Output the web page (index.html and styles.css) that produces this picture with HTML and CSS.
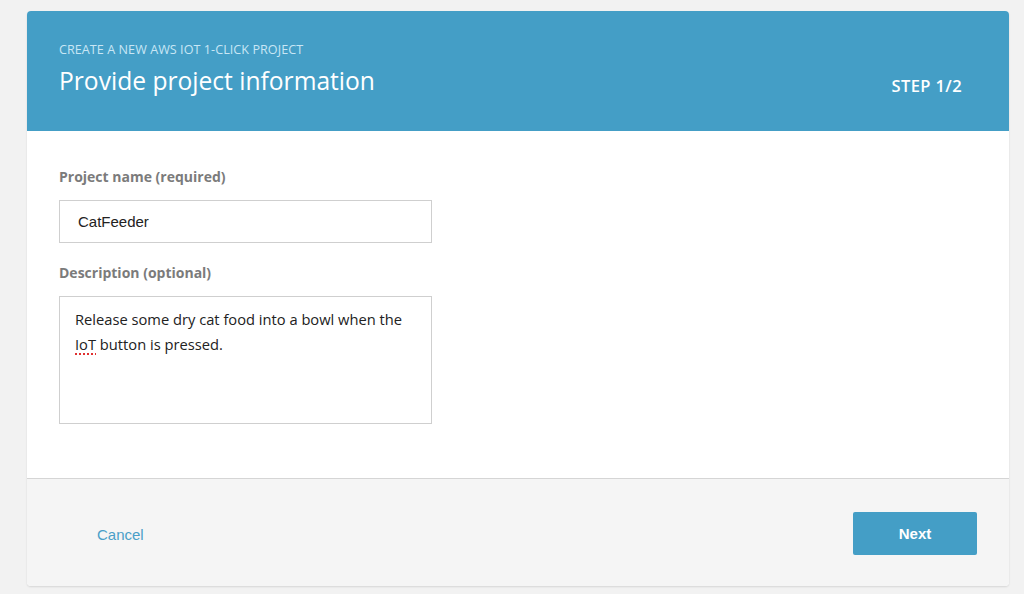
FILE: index.html
```html
<!DOCTYPE html>
<html>
<head>
<meta charset="utf-8">
<link rel="stylesheet" href="styles.css">
</head>
<body>
<div class="card">
  <div class="header">
    <div class="titles">
      <div class="eyebrow">CREATE A NEW AWS IOT 1-CLICK PROJECT</div>
      <div class="title">Provide project information</div>
    </div>
    <div class="step">STEP 1/2</div>
  </div>
  <div class="body">
    <div class="label">Project name (required)</div>
    <div class="input">CatFeeder</div>
    <div class="label label2">Description (optional)</div>
    <div class="textarea">Release some dry cat food into a bowl when the<br><span class="spell">IoT</span> button is pressed.</div>
  </div>
  <div class="footer">
    <a class="cancel">Cancel</a>
    <button class="next">Next</button>
  </div>
</div>
</body>
</html>
```

FILE: styles.css
```css
html, body {
  margin: 0;
  padding: 0;
  background: #f2f2f2;
  font-family: "Open Sans", "Liberation Sans", sans-serif;
}
body {
  padding: 11px 15px 0 27px;
  height: 594px;
  box-sizing: border-box;
}
.card {
  width: 982px;
  border-radius: 4px;
  overflow: hidden;
  box-shadow: 0 1px 2px rgba(0,0,0,0.12);
  background: #fff;
}
.header {
  background: #449ec6;
  height: 120px;
  box-sizing: border-box;
  padding: 30px 47px 0 32px;
  display: flex;
  justify-content: space-between;
  align-items: flex-start;
}
.eyebrow {
  color: #c8e6f5;
  font-size: 12.6px;
  line-height: 17px;
  letter-spacing: 0.05px;
}
.title {
  color: #fff;
  font-size: 24.6px;
  line-height: 32px;
  margin-top: 7px;
}
.step {
  color: #fff;
  font-size: 16.5px;
  font-weight: 600;
  margin-top: 35px;
  line-height: 20px;
  letter-spacing: 0.4px;
}
.body {
  height: 348px;
  box-sizing: border-box;
  padding: 36px 32px 0;
  border-bottom: 1px solid #d5d5d5;
}
.label {
  color: #7b7b7b;
  font-weight: 700;
  font-size: 14px;
  line-height: 20px;
}
.label2 { margin-top: 20px; }
.input {
  margin-top: 13px;
  width: 373px;
  height: 43px;
  box-sizing: border-box;
  border: 1px solid #cfcfcf;
  padding: 0 18px;
  display: flex;
  align-items: center;
  font-family: "Liberation Sans", Arial, sans-serif;
  font-size: 15px;
  color: #222;
}
.textarea {
  margin-top: 13px;
  width: 373px;
  height: 128px;
  box-sizing: border-box;
  border: 1px solid #cfcfcf;
  padding: 10px 15px;
  font-size: 14.7px;
  line-height: 25px;
  color: #222;
}
.spell {
  text-decoration-line: underline;
  text-decoration-style: dotted;
  text-decoration-color: #e03030;
  text-decoration-thickness: 2px;
  text-underline-offset: 3px;
}
.footer {
  background: #f5f5f5;
  height: 107px;
  box-sizing: border-box;
  padding: 3px 32px 0 70px;
  display: flex;
  justify-content: space-between;
  align-items: center;
}
.cancel {
  color: #4a9fc8;
  font-family: "Liberation Sans", Arial, sans-serif;
  font-size: 15px;
}
.next {
  width: 124px;
  height: 43px;
  border: none;
  border-radius: 2px;
  background: #449ec6;
  color: #fff;
  font-family: "Liberation Sans", Arial, sans-serif;
  font-weight: 700;
  font-size: 15px;
  margin-top: -1px;
}
```
